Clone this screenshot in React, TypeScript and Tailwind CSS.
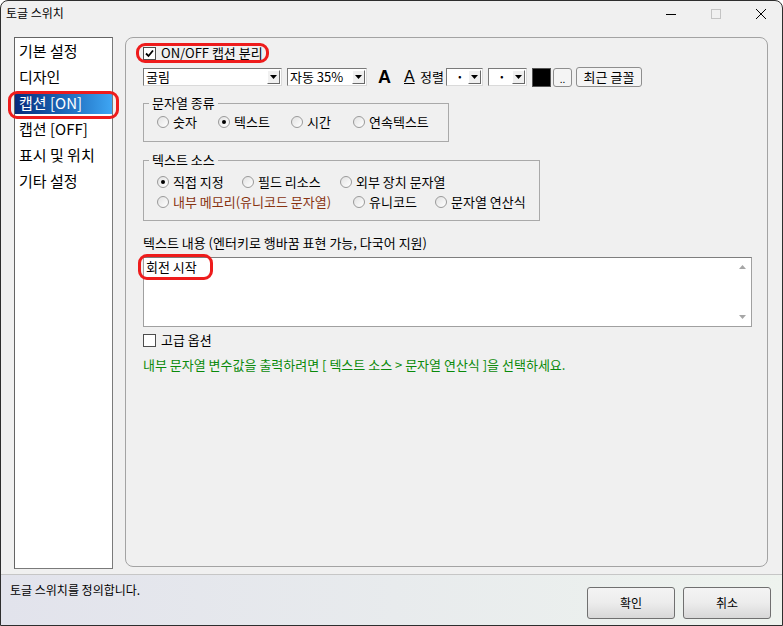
import React from "react"

const Tri = ({ color = "#000", up = false }: { color?: string; up?: boolean }) => (
  <svg width="7" height="4" viewBox="0 0 7 4">
    <polygon points={up ? "0,4 7,4 3.5,0" : "0,0 7,0 3.5,4"} fill={color} />
  </svg>
)

const DropBtn = () => (
  <div className="w-[13px] h-[14px] flex items-center justify-center bg-[#f0f0f0] border border-t-white border-l-white border-r-[#696969] border-b-[#696969] shrink-0">
    <Tri />
  </div>
)

const Combo = ({ text, w, textClass = "" }: { text: string; w: string; textClass?: string }) => (
  <div className={`${w} h-[18px] flex items-center bg-white border border-t-[#7a7a7a] border-l-[#7a7a7a] border-r-[#dadada] border-b-[#dadada] pl-[2px] pr-[1px]`}>
    <span className={`flex-1 text-[13px] leading-[16px] whitespace-nowrap ${textClass}`}>{text}</span>
    <DropBtn />
  </div>
)

const Radio = ({ checked }: { checked?: boolean }) => (
  <span className="w-[12px] h-[12px] rounded-full border border-[#9a9a9a] bg-linear-to-br from-[#e2e2e2] to-white flex items-center justify-center shrink-0">
    {checked && <span className="w-[4px] h-[4px] rounded-full bg-black" />}
  </span>
)

const RadioItem = ({ label, checked, className = "", textClass = "" }: any) => (
  <div className={`flex items-center gap-[4px] h-[16px] ${className}`}>
    <Radio checked={checked} />
    <span className={`text-[13px] leading-[16px] whitespace-nowrap ${textClass}`}>{label}</span>
  </div>
)

const Check = ({ checked }: { checked?: boolean }) => (
  <span className="w-[13px] h-[13px] border border-[#4d4d4d] bg-white flex items-center justify-center shrink-0">
    {checked && (
      <svg width="9" height="9" viewBox="0 0 9 9">
        <path d="M1 4.5 L3.5 7 L8 1.5" stroke="#000" strokeWidth="1.8" fill="none" />
      </svg>
    )}
  </span>
)

const menu = ["기본 설정", "디자인", "캡션 [ON]", "캡션 [OFF]", "표시 및 위치", "기타 설정"]

export default function App() {
  return (
    <div className="w-[783px] h-[626px] flex flex-col bg-[#f0f0f0] border border-[#2e2e2e] rounded-t-[8px] overflow-hidden font-['Noto_Sans_CJK_KR',sans-serif] text-black">
      {/* title bar */}
      <div className="h-[30px] flex items-start justify-between shrink-0">
        <span className="pl-[5px] pt-[4px] text-[12px] leading-[16px]">토글 스위치</span>
        <div className="flex items-center gap-[35px] pr-[16px] pt-[8px]">
          <svg width="10" height="10" viewBox="0 0 10 10">
            <line x1="0" y1="5.5" x2="10" y2="5.5" stroke="#000" strokeWidth="1" />
          </svg>
          <svg width="10" height="10" viewBox="0 0 10 10">
            <rect x="0.5" y="0.5" width="9" height="9" fill="none" stroke="#c4c4c4" strokeWidth="1" />
          </svg>
          <svg width="10" height="10" viewBox="0 0 10 10">
            <path d="M0 0 L10 10 M10 0 L0 10" stroke="#000" strokeWidth="1" />
          </svg>
        </div>
      </div>

      {/* body */}
      <div className="h-[543px] flex items-start gap-[12px] pl-[13px] pr-[14px] pt-[6px] shrink-0">
        <div className="w-[99px] h-[532px] bg-white border border-[#7a7a7a] border-t-[#646464] border-l-[#646464] shrink-0">
          {menu.map((m) => (
            <div key={m} className="relative h-[26px] flex items-center">
              {m === "캡션 [ON]" ? (
                <>
                  <div className="w-full h-[21px] flex items-center pl-[4px] bg-linear-to-r from-[#082a7c] to-[#3ea6f4] text-white text-[15px] leading-[18px]">
                    {m}
                  </div>
                  <span className="absolute -left-[7px] top-[1px] w-[111px] h-[28px] border-[3px] border-[#ee1c1c] rounded-[9px]" />
                </>
              ) : (
                <span className="pl-[4px] text-[15px] leading-[18px] whitespace-nowrap">{m}</span>
              )}
            </div>
          ))}
        </div>

        <div className="flex-1 h-[530px] border border-[#a3a3a3] rounded-[8px] flex flex-col items-start pl-[17px]">
          {/* ON/OFF row */}
          <div className="relative mt-[5px] h-[20px] flex items-center gap-[5px]">
            <Check checked />
            <span className="text-[13px] leading-[16px] whitespace-nowrap">ON/OFF 캡션 분리</span>
            <span className="absolute -left-[7px] top-0 w-[133px] h-[20px] border-[3px] border-[#ee1c1c] rounded-[9px]" />
          </div>

          {/* font toolbar */}
          <div className="mt-[4px] h-[20px] flex items-center">
            <Combo text="굴림" w="w-[139px]" />
            <div className="ml-[5px]">
              <Combo text="자동 35%" w="w-[80px]" />
            </div>
            <span className="ml-[11px] w-[14px] font-['Liberation_Sans',sans-serif] font-bold text-[18px] leading-[20px]">A</span>
            <span className="ml-[12px] w-[10px] font-['Liberation_Sans',sans-serif] text-[16px] leading-[18px] underline">A</span>
            <span className="ml-[6px] w-[26px] text-[13px] leading-[16px]">정렬</span>
            <Combo text="·" w="w-[37px]" textClass="pl-[7px] font-bold" />
            <div className="ml-[5px]">
              <Combo text="·" w="w-[39px]" textClass="pl-[7px] font-bold" />
            </div>
            <div className="ml-[5px] w-[19px] h-[19px] bg-black border border-[#555]" />
            <div className="ml-[2px] w-[19px] h-[19px] rounded-[3px] border border-[#8e8e8e] bg-[#f4f4f4] flex items-end justify-center text-[10px] leading-[14px]">
              ..
            </div>
            <div className="ml-[4px] w-[66px] h-[20px] rounded-[3px] border border-[#8e8e8e] bg-[#f4f4f4] flex items-center justify-center text-[13px] leading-[16px]">
              최근 글꼴
            </div>
          </div>

          {/* 문자열 종류 */}
          <fieldset className="mt-[9px] w-[306px] border border-[#a9a9a9] pb-[11px]">
            <legend className="ml-[5px] px-[3px] text-[13px] leading-[14px]">문자열 종류</legend>
            <div className="ml-[13px] mt-[4px] flex">
              <RadioItem label="숫자" className="w-[61px]" />
              <RadioItem label="텍스트" checked className="w-[73px]" />
              <RadioItem label="시간" className="w-[62px]" />
              <RadioItem label="연속텍스트" />
            </div>
          </fieldset>

          {/* 텍스트 소스 */}
          <fieldset className="mt-[11px] w-[397px] border border-[#a9a9a9] pb-[10px]">
            <legend className="ml-[5px] px-[3px] text-[13px] leading-[14px]">텍스트 소스</legend>
            <div className="ml-[13px] mt-[7px] flex">
              <RadioItem label="직접 지정" checked className="w-[85px]" />
              <RadioItem label="필드 리소스" className="w-[98px]" />
              <RadioItem label="외부 장치 문자열" />
            </div>
            <div className="ml-[13px] mt-[4px] flex">
              <RadioItem label="내부 메모리(유니코드 문자열)" className="w-[196px]" textClass="text-[#883311]" />
              <RadioItem label="유니코드" className="w-[82px]" />
              <RadioItem label="문자열 연산식" />
            </div>
          </fieldset>

          <div className="mt-[14px] text-[13px] leading-[16px]">텍스트 내용 (엔터키로 행바꿈 표현 가능, 다국어 지원)</div>

          <div className="relative mt-[6px] w-[609px] h-[70px] bg-white border border-[#a0a0a0] border-t-[#7e7e7e] flex">
            <div className="flex-1 pl-[2px] pt-[1px] text-[13px] leading-[16px]">회전 시작</div>
            <div className="w-[17px] flex flex-col items-center justify-between pt-[7px] pb-[7px]">
              <Tri up color="#a6a6a6" />
              <Tri color="#a6a6a6" />
            </div>
            <span className="absolute -left-[6px] -top-[4px] w-[75px] h-[26px] border-[3px] border-[#ee1c1c] rounded-[9px]" />
          </div>

          <div className="mt-[5px] h-[16px] flex items-center gap-[5px]">
            <Check />
            <span className="text-[13px] leading-[16px]">고급 옵션</span>
          </div>

          <div className="mt-[9px] text-[13px] leading-[16px] text-[#0a8a0a] whitespace-nowrap">
            내부 문자열 변수값을 출력하려면 [ 텍스트 소스 &gt; 문자열 연산식 ]을 선택하세요.
          </div>
        </div>
      </div>

      {/* status bar */}
      <div className="flex-1 flex items-start justify-between border-t border-[#c6c6c6] bg-linear-to-r from-[#e2e3ec] to-[#eef3ee] pl-[9px] pr-[11px]">
        <span className="mt-[7px] text-[12px] leading-[16px]">토글 스위치를 정의합니다.</span>
        <div className="mt-[12px] flex gap-[8px]">
          {["확인", "취소"].map((b) => (
            <div
              key={b}
              className="w-[88px] h-[32px] rounded-[3px] border border-[#707070] bg-linear-to-b from-[#f4f4f4] via-[#ececec] to-[#d8d8d8] flex items-center justify-center text-[12px] leading-[16px]"
            >
              {b}
            </div>
          ))}
        </div>
      </div>
    </div>
  )
}
